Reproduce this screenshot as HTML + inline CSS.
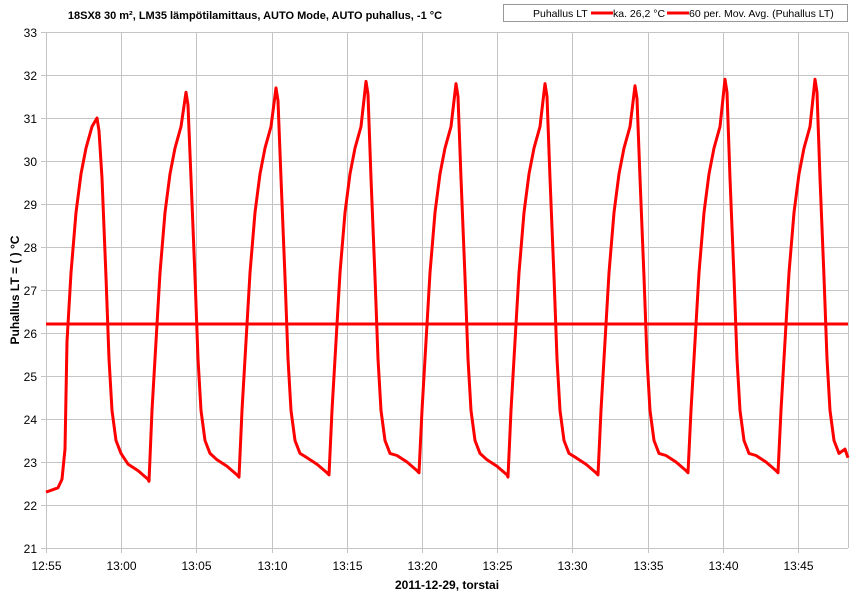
<!DOCTYPE html><html><head><meta charset="utf-8"><style>
body{margin:0;background:#fff;width:860px;height:608px;overflow:hidden;font-family:"Liberation Sans",sans-serif}
</style></head><body>
<svg width="860" height="608" xmlns="http://www.w3.org/2000/svg" font-family="Liberation Sans, sans-serif">
<g id="grid" stroke="#c4c4c4" stroke-width="1"></g>
<text x="255" y="19" font-size="11" font-weight="bold" text-anchor="middle">18SX8 30 m², LM35 lämpötilamittaus, AUTO Mode, AUTO puhallus, -1 °C</text>
<rect x="503.5" y="4.5" width="344" height="17" fill="#fff" stroke="#999"/>
<text x="533" y="17" font-size="10.5">Puhallus LT</text>
<line x1="591" y1="13" x2="613" y2="13" stroke="#f00" stroke-width="3"/>
<text x="613" y="17" font-size="10.5">ka. 26,2 °C</text>
<line x1="667" y1="13" x2="689" y2="13" stroke="#f00" stroke-width="3"/>
<text x="689" y="17" font-size="10.5">60 per. Mov. Avg. (Puhallus LT)</text>
<g id="lab" font-size="12" fill="#000"></g>
<text x="447" y="589" font-size="12" font-weight="bold" text-anchor="middle">2011-12-29, torstai</text>
<text transform="translate(19,290) rotate(-90)" font-size="12" font-weight="bold" text-anchor="middle">Puhallus LT = ( ) °C</text>
<line x1="46" y1="324" x2="848" y2="324" stroke="#f00" stroke-width="3"/>
<path id="curve" fill="none" stroke="#f00" stroke-width="3" stroke-linejoin="round"/>
</svg>
<script>
var ns="http://www.w3.org/2000/svg",g=document.getElementById('grid'),lab=document.getElementById('lab');
function el(p,t,a){var e=document.createElementNS(ns,t);for(var k in a)e.setAttribute(k,a[k]);p.appendChild(e);return e}
function Y(v){return 548-(v-21)*43}
for(var v=21;v<=33;v++){var y=Y(v)+.5;el(g,'line',{x1:41,y1:y,x2:848,y2:y});var t=el(lab,'text',{x:37,y:Y(v)+5,'text-anchor':'end'});t.textContent=v}
var names=['12:55','13:00','13:05','13:10','13:15','13:20','13:25','13:30','13:35','13:40','13:45'];
for(var i=0;i<11;i++){var x=Math.round(46+i*75.2)+.5;el(g,'line',{x1:x,y1:32,x2:x,y2:553});var t=el(lab,'text',{x:x,y:570,'text-anchor':'middle'});t.textContent=names[i]}
el(g,'line',{x1:848.5,y1:32,x2:848.5,y2:548});
var P=[98,187,277,367,457,546,636,726,816],V=[31,31.6,31.7,31.85,31.8,31.8,31.75,31.9,31.9],T=[22.6,22.7,22.75,22.8,22.7,22.75,22.8,22.8,23];
var pts=[[46,22.3],[58,22.4],[62,22.6],[65,23.3]];
for(var k=0;k<9;k++){var p=P[k],v=V[k];
 if(k>0){var tp=T[k-1];pts.push([p-38,tp-0.05],[p-35,24.2])}
 pts.push([p-31,25.8],[p-27,27.4],[p-22,28.8],[p-17,29.7],[p-12,30.3],[p-6,30.8],[p-1,v],[p+1,v-0.3],[p+4,29.6],[p+8,27.3],[p+11,25.4],[p+14,24.2],[p+18,23.5],[p+23,23.2]);
 if(k<8){var tt=T[k];pts.push([p+30,tt+0.35],[p+40,tt+0.2],[p+50,tt])}else pts.push([p+29,23.3],[p+32,23.1])}
document.getElementById('curve').setAttribute('d','M'+pts.map(function(q){return q[0]+','+Y(q[1]).toFixed(1)}).join(' L'));
</script>
</body></html>
